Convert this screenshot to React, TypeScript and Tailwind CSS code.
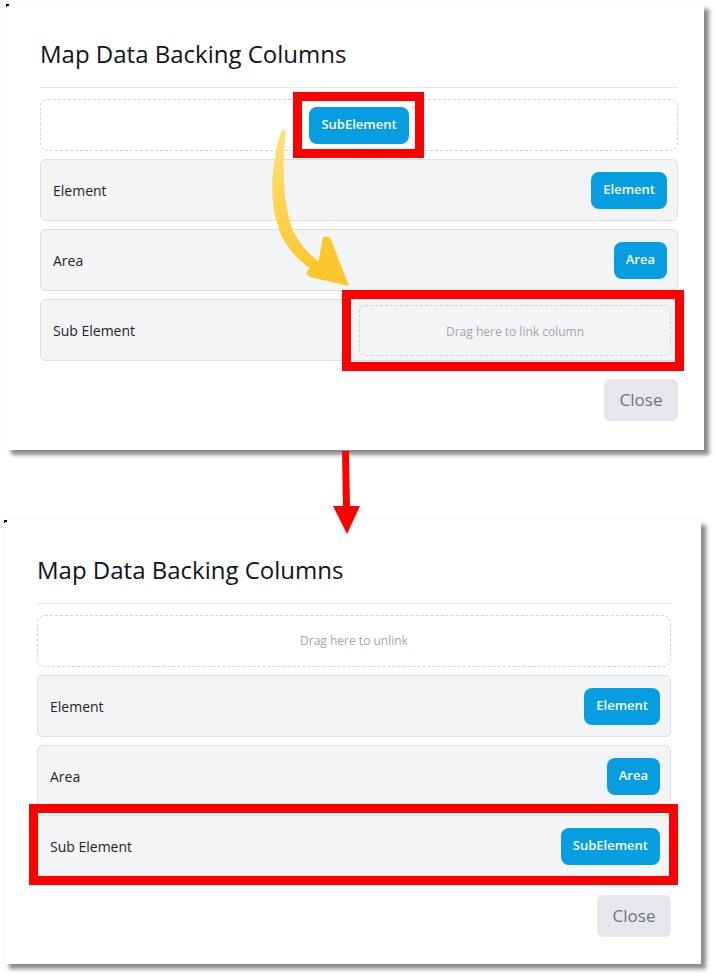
import React from "react"

type Row = { label: string; column?: string }

function ColumnButton({ text, marked }: { text: string; marked?: boolean }) {
  return (
    <span className="relative inline-flex">
      <button className="h-[37px] rounded-[8px] bg-[#069ee0] px-3 text-[13px] font-semibold text-white">
        {text}
      </button>
      {marked && (
        <span className="pointer-events-none absolute -left-4 -right-[15px] -top-[15px] -bottom-[14px] border-[9px] border-[#ff0000]" />
      )}
    </span>
  )
}

function DropZone({ text, marked }: { text: string; marked?: boolean }) {
  return (
    <div className="relative">
      <div className="flex h-[51px] w-[312px] items-center justify-center rounded-[6px] border border-dashed border-[#cfd3d8] pt-[3px] text-[12px] text-[#a3a7ad]">
        {text}
      </div>
      {marked && (
        <span className="pointer-events-none absolute -left-[17px] -right-[13px] -top-[15px] -bottom-[15px] border-[9px] border-[#ff0000]" />
      )}
    </div>
  )
}

function Panel({
  after,
  className,
}: {
  after: boolean
  className: string
}) {
  const rows: Row[] = [
    { label: "Element", column: "Element" },
    { label: "Area", column: "Area" },
    { label: "Sub Element", column: after ? "SubElement" : undefined },
  ]
  return (
    <div
      className={
        "relative flex flex-col bg-white shadow-[0_0_2px_rgba(0,0,0,0.08),5px_5px_4px_rgba(0,0,0,0.45)] " +
        className
      }
    >
      <span className="absolute left-0 top-0 h-[2px] w-[3px] bg-black" />
      <span className="absolute left-0 top-0 h-[3px] w-[1px] bg-black" />
      <h2 className="h-[29px] text-[24px] font-medium leading-[29px] text-[#111418]">
        Map Data Backing Columns
      </h2>
      <div className="mt-[19px] border-t border-[#e4e6e9]" />
      <div className="mt-[11px] flex h-[52px] items-center justify-center rounded-[8px] border border-dashed border-[#cfd3d8]">
        {after ? (
          <span className="text-[12px] text-[#a3a7ad]">Drag here to unlink</span>
        ) : (
          <ColumnButton text="SubElement" marked />
        )}
      </div>
      <div className="mt-2 flex flex-col gap-2">
        {rows.map((r) => (
          <div key={r.label} className="relative">
            <div
              className={
                "flex h-[62px] items-center justify-between rounded-[6px] border border-[#dadde1] bg-[#f3f4f6] pl-3 " +
                (r.column ? "pr-[10px]" : "pr-[6px]")
              }
            >
              <span className="text-[14px] text-[#212529]">{r.label}</span>
              {r.column ? (
                <ColumnButton text={r.column} />
              ) : (
                <DropZone text="Drag here to link column" marked />
              )}
            </div>
            {after && r.label === "Sub Element" && (
              <span className="pointer-events-none absolute -left-2 -right-[7px] -top-[11px] -bottom-2 border-[9px] border-[#ff0000]" />
            )}
          </div>
        ))}
      </div>
      <div className="mt-[18px] flex justify-end">
        <button className="h-[42px] w-[74px] rounded-[6px] bg-[#e5e7eb] text-[17px] text-[#6e757d]">
          Close
        </button>
      </div>
    </div>
  )
}

export default function App() {
  return (
    <div className="relative h-[977px] w-[717px] overflow-hidden bg-white font-['Open_Sans',sans-serif]">
      <div className="flex flex-col">
        <Panel
          after={false}
          className="ml-[6px] mt-[4px] h-[446px] w-[698px] pl-[34px] pr-[26px] pt-[35px]"
        />
        <Panel
          after
          className="ml-[4px] mt-[70px] h-[444px] w-[697px] pl-[33px] pr-[30px] pt-[35px]"
        />
      </div>

      {/* curved yellow arrow */}
      <svg
        className="pointer-events-none absolute left-0 top-0"
        width="717"
        height="977"
        viewBox="0 0 717 977"
      >
        <defs>
          <linearGradient id="yel" x1="0" y1="0" x2="0" y2="1">
            <stop offset="0" stopColor="#ffe27a" />
            <stop offset="1" stopColor="#fcc72c" />
          </linearGradient>
        </defs>
        <path
          d="M282 129 C270 165 268 205 282 237 C292 255 304 265 316 272 L321 263 C308 254 298 242 292 228 C283 202 282 166 286 131 Z"
          fill="url(#yel)"
        />
        <path
          d="M323 237 Q330 235 332 242 L349 286 L310 277 Q304 274 309 269 L318 264 Z"
          fill="#fcc72c"
        />
        {/* red down arrow */}
        <path d="M342 451 L349 451 L350 508 L343 508 Z" fill="#ff0000" />
        <path d="M333 506 L360 506 L347 534 Z" fill="#ff0000" />
      </svg>
    </div>
  )
}
